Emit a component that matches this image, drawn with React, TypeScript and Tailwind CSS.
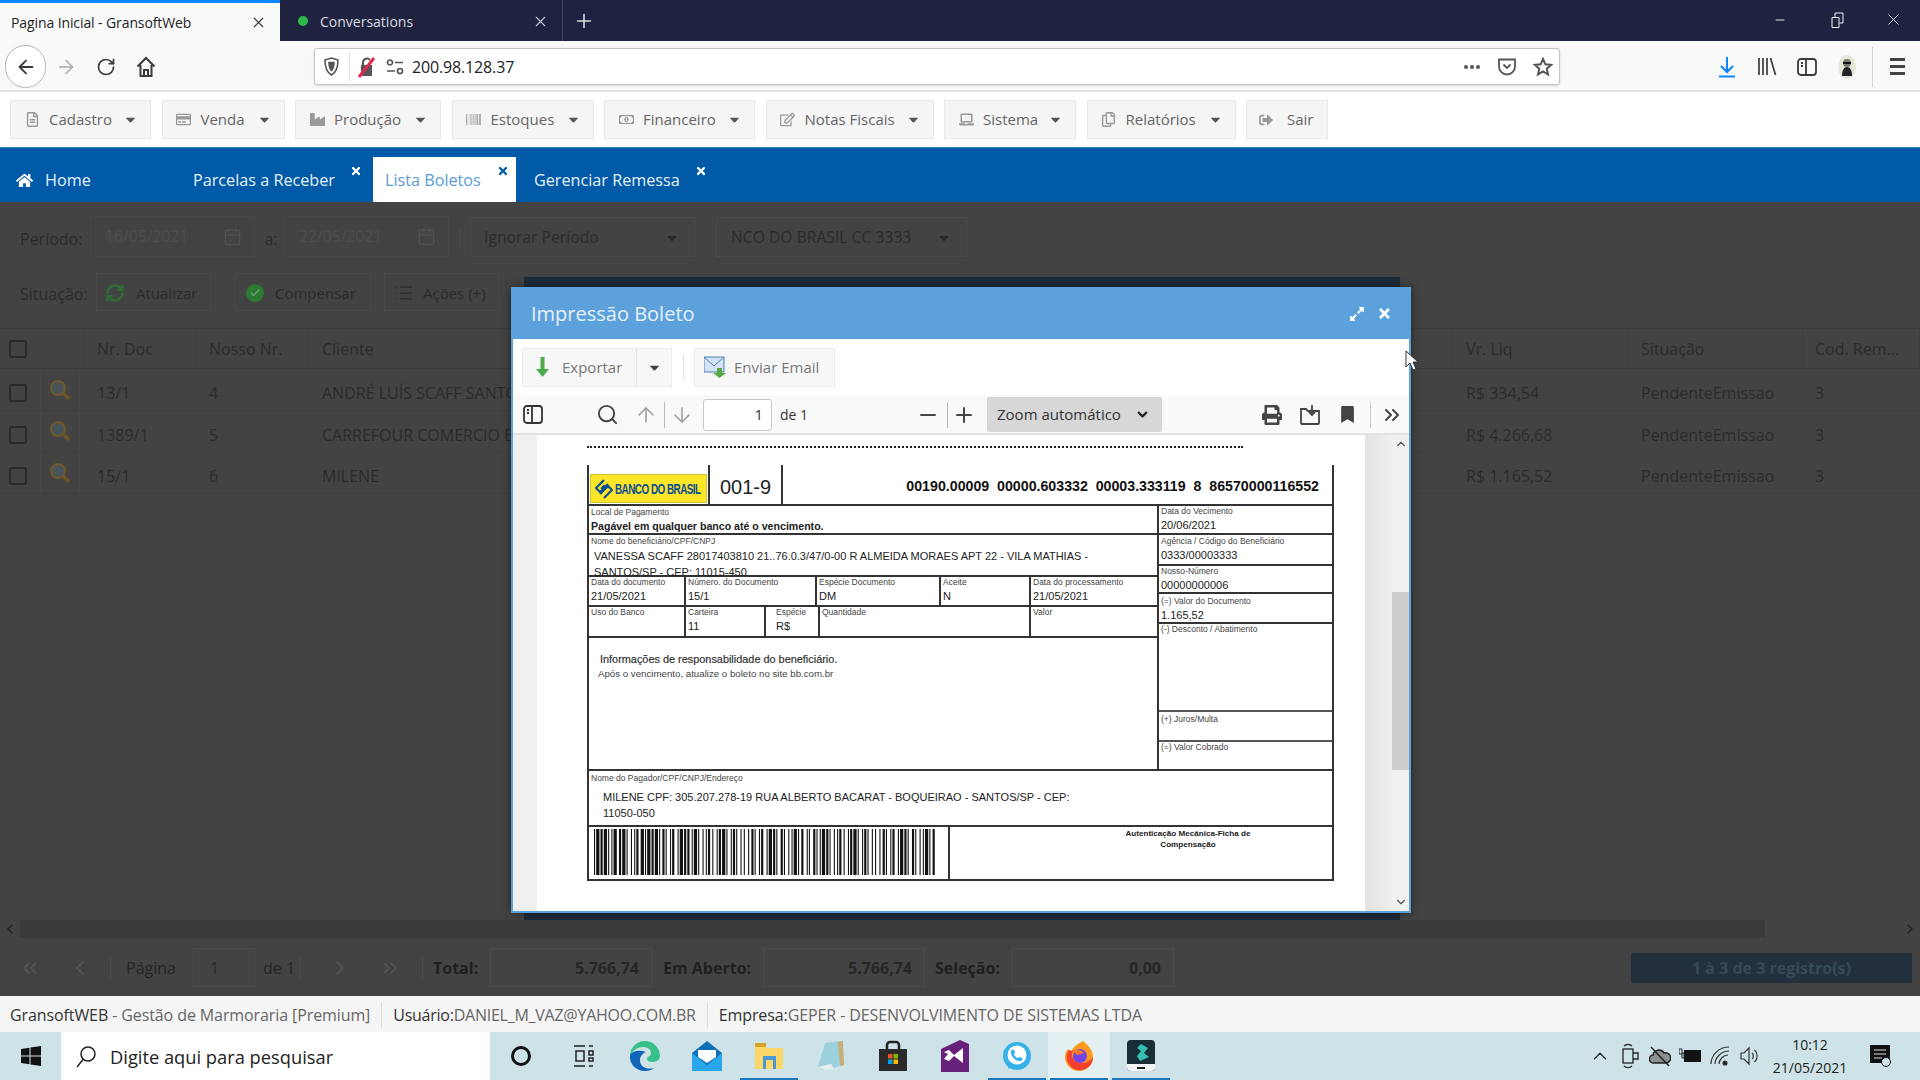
import { ArrowDown, ArrowLeft, ArrowRight, ArrowUp, ChevronLeft, ChevronRight, ChevronsLeft, ChevronsRight, Minus, Plus, RefreshCw, RotateCw, Search, List, Calendar, ChevronDown, ChevronUp, X, Check } from 'lucide-react'
import { FaBarcode, FaBookmark, FaCaretDown, FaExpandAlt, FaHome, FaIndustry, FaLaptop, FaPrint, FaRegCopy, FaRegCreditCard, FaRegEdit, FaRegFileAlt, FaRegMoneyBillAlt, FaSignOutAlt, FaTimes } from 'react-icons/fa'
import type { ReactNode } from 'react'

const menus = [
  { label: 'Cadastro', width: 'w-[141px]', icon: <FaRegFileAlt /> },
  { label: 'Venda', width: 'w-[123px]', icon: <FaRegCreditCard /> },
  { label: 'Produção', width: 'w-[146px]', icon: <FaIndustry /> },
  { label: 'Estoques', width: 'w-[142px]', icon: <FaBarcode /> },
  { label: 'Financeiro', width: 'w-[151px]', icon: <FaRegMoneyBillAlt /> },
  { label: 'Notas Fiscais', width: 'w-[168px]', icon: <FaRegEdit /> },
  { label: 'Sistema', width: 'w-[132px]', icon: <FaLaptop /> },
  { label: 'Relatórios', width: 'w-[149px]', icon: <FaRegCopy /> },
]

const rows = [
  { doc: '13/1', nosso: '4', cliente: 'ANDRÉ LUÍS SCAFF SANTOS', valor: 'R$ 334,54' },
  { doc: '1389/1', nosso: '5', cliente: 'CARREFOUR COMERCIO E INDUSTRIA', valor: 'R$ 4.266,68' },
  { doc: '15/1', nosso: '6', cliente: 'MILENE', valor: 'R$ 1.165,52' },
]

// widths of the barcode bars, alternating black and white
const bars = '113121311211322131131211223111312131122113112311312122113113121122131121311311211312131221131123113121132113121131122311132112113121131211221311213113112113121312211311231131211321131211311223'
  .split('')
  .map(Number)

function Barcode() {
  let x = 0
  const rects = bars.map((w, i) => {
    const rect = i % 2 === 0 ? <rect key={i} x={x} y={0} width={w} height={46} fill="#111" /> : null
    x += w
    return rect
  })
  return (
    <svg width={344} height={46} viewBox={`0 0 ${x} 46`} preserveAspectRatio="none">
      {rects}
    </svg>
  )
}

function Field({ label, value, className, bold }: { label: string; value?: string; className?: string; bold?: boolean }) {
  return (
    <div className={`px-[2px] leading-none ${className ?? ''}`}>
      <div className="text-[8.500px] leading-[11px] text-[#444] whitespace-nowrap">{label}</div>
      {value && <div className={`leading-[16px] text-[#222] whitespace-nowrap ${bold ? 'font-bold text-[10.600px]' : 'text-[11px]'}`}>{value}</div>}
    </div>
  )
}

function TaskSlot({ children, active, open }: { children: ReactNode; active?: boolean; open?: boolean }) {
  return (
    <div className={`relative w-[62px] h-full flex items-center justify-center ${active ? 'bg-[#e4f0f2]' : ''}`}>
      {children}
      {open && <div className="absolute bottom-0 left-[2px] right-[2px] h-[2px] bg-[#1a78bd]" />}
    </div>
  )
}

function BrowserBar() {
  return (
    <>
      <div className="h-[41px] bg-[#20233f] flex text-[14px] shrink-0">
        <div className="w-[280px] bg-[#fafafa] border-t-[3px] border-[#0a84ff] flex items-center pl-[11px] pr-[13px] text-[#222]">
          <span className="tracking-[-0.1px]">Pagina Inicial - GransoftWeb</span>
          <X className="ml-auto w-[17px] h-[17px] text-[#333]" strokeWidth={1.5} />
        </div>
        <div className="w-[283px] border-r border-[#41445f] flex items-center pl-[18px] pr-[13px] text-[#d9dae2] pt-[1px]">
          <span className="w-[10px] h-[10px] rounded-full bg-[#2fb84a]" />
          <span className="ml-[12px]">Conversations</span>
          <X className="ml-auto w-[17px] h-[17px] text-[#c8c9d4]" strokeWidth={1.5} />
        </div>
        <Plus className="ml-[10px] mt-[10px] w-[22px] h-[22px] text-[#d5d6df]" strokeWidth={1.8} />
        <div className="ml-auto flex items-center text-[#f0f0f4] pb-[2px]">
          <Minus className="w-[14px] h-[14px]" strokeWidth={1.6} />
          <svg className="ml-[44px] w-[13px] h-[16px]" viewBox="0 0 13 16" fill="none" stroke="currentColor">
            <path d="M1 5.5h7v10H1zM4 5V1h8v10H8.5" />
          </svg>
          <X className="ml-[40px] mr-[17px] w-[19px] h-[19px]" strokeWidth={1.1} />
        </div>
      </div>
      <div className="h-[51px] bg-[#f9f9fa] border-b-2 border-[#e4e4e4] flex items-center shrink-0 text-[#3b3b3b] pt-[2px]">
        <div className="ml-[5px] w-[41px] h-[43px] rounded-full border border-[#b5b5b5] bg-white flex items-center justify-center">
          <ArrowLeft className="w-[22px] h-[22px]" strokeWidth={2} />
        </div>
        <div className="w-10 flex justify-center text-[#a8a8a8]">
          <ArrowRight className="w-[22px] h-[22px]" strokeWidth={1.6} />
        </div>
        <div className="w-10 flex justify-center">
          <RotateCw className="w-[20px] h-[20px]" strokeWidth={2} />
        </div>
        <div className="w-10 flex justify-center">
          <svg className="w-[20px] h-[22px]" viewBox="0 0 20 22" fill="none" stroke="currentColor" strokeWidth="2">
            <path d="M1.5 10.5 10 2l8.5 8.5M4.5 9v11h11V9M8 20v-6h4v6" />
          </svg>
        </div>
        <div className="ml-[148px] w-[1246px] h-[37px] bg-white border border-[#c4c4c4] rounded-[3px] shadow-sm flex items-center text-[#555]">
          <svg className="ml-[9px] w-[15px] h-[19px]" viewBox="0 0 15 19" fill="none" stroke="currentColor" strokeWidth="1.6">
            <path d="M1 3 7.500 1 14 3c0 7-1 12-6.500 15C2 15 1 10 1 3Z" />
            <path d="M5 5.500h5c0 4-.6 6-2.500 8C5.600 11.500 5 9.500 5 5.500Z" fill="currentColor" />
          </svg>
          <div className="ml-[10px] w-px h-[30px] bg-[#e2e2e2]" />
          <svg className="ml-[8px] w-[18px] h-[22px]" viewBox="0 0 18 22">
            <path d="M3 9h11v11H3z" fill="#555" />
            <path d="M5 9V6a4 4 0 0 1 7-2" fill="none" stroke="#555" strokeWidth="2" />
            <path d="M1 21 16 2" stroke="#e22850" strokeWidth="3" />
          </svg>
          <svg className="ml-[10px] w-[18px] h-[16px]" viewBox="0 0 18 16" fill="none" stroke="#555" strokeWidth="1.7">
            <circle cx="4" cy="3.500" r="2.500" />
            <path d="M9 3.500h8M1 12h8" />
            <circle cx="14" cy="12" r="2.500" />
          </svg>
          <span className="ml-[8px] text-[16px] text-[#222] tracking-[-0.15px]">200.98.128.37</span>
          <div className="ml-auto flex items-center mr-[6px]">
            <div className="flex gap-[2px]">
              <span className="w-[4px] h-[4px] rounded-full bg-[#555]" />
              <span className="w-[4px] h-[4px] rounded-full bg-[#555]" />
              <span className="w-[4px] h-[4px] rounded-full bg-[#555]" />
            </div>
            <svg className="ml-[17px] w-[20px] h-[18px]" viewBox="0 0 20 18" fill="none" stroke="currentColor" strokeWidth="1.800">
              <path d="M2 1.500h16v7a8 8 0 0 1-16 0z" />
              <path d="m6.500 6.500 3.500 3.500 3.500-3.500" />
            </svg>
            <svg className="ml-[16px] w-[20px] h-[20px]" viewBox="0 0 20 20" fill="none" stroke="currentColor" strokeWidth="2">
              <path d="m10 2 2.400 5.300 5.600.6-4.200 3.800 1.200 5.700L10 14.500 5 17.400l1.200-5.700L2 7.900l5.600-.6z" />
            </svg>
          </div>
        </div>
        <div className="ml-[147px] w-10 flex justify-center text-[#0a84ff]">
          <svg className="w-[16px] h-[22px]" viewBox="0 0 16 22" fill="none" stroke="currentColor" strokeWidth="2">
            <path d="M8 1v14M2 10l6 6 6-6" />
            <path d="M0 20.500h16" />
          </svg>
        </div>
        <div className="w-10 flex justify-center">
          <svg className="w-[20px] h-[19px]" viewBox="0 0 20 19" fill="none" stroke="currentColor" strokeWidth="1.700">
            <path d="M2 1v17M6 1v17M10 1v17M13.500 1 18.500 18" />
          </svg>
        </div>
        <div className="w-10 flex justify-center">
          <svg className="w-[20px] h-[18px]" viewBox="0 0 20 18" fill="none" stroke="currentColor" strokeWidth="1.800">
            <rect x="1" y="1" width="18" height="16" rx="3" />
            <path d="M9 1v16M4 5h2M4 8h2" />
          </svg>
        </div>
        <div className="w-10 flex justify-center">
          <svg className="w-[20px] h-[24px]" viewBox="0 0 20 24">
            <ellipse cx="10" cy="12" rx="9" ry="12" fill="#e8e6dc" />
            <circle cx="10" cy="8" r="4" fill="#77776e" />
            <path d="M6 8h8" stroke="#111" strokeWidth="2" />
            <path d="M5 21c0-6 2-9 5-9s5 3 5 9z" fill="#222" />
          </svg>
        </div>
        <div className="ml-[5px] w-px h-[40px] bg-[#d4d4d4]" />
        <div className="ml-[17px] flex flex-col gap-[4px]">
          <span className="w-[15px] h-[3px] bg-[#444]" />
          <span className="w-[15px] h-[3px] bg-[#444]" />
          <span className="w-[15px] h-[3px] bg-[#444]" />
        </div>
      </div>
    </>
  )
}

function AppHeader() {
  return (
    <>
      <div className="h-[55px] bg-white pt-[8px] pl-[10px] flex gap-[10.500px] shrink-0 items-start">
        {menus.map((menu) => (
          <div key={menu.label} className={`${menu.width} h-[39px] bg-[#f5f5f5] border border-[#e9e9e9] flex items-center pl-[12px] pr-[12px] text-[#666] text-[15px]`}>
            <span className="text-[#999] text-[15px] w-[18px] flex justify-center">{menu.icon}</span>
            <span className="ml-[8px]">{menu.label}</span>
            <FaCaretDown className="ml-auto text-[#555] text-[15px]" />
          </div>
        ))}
        <div className="w-[82px] h-[39px] bg-[#f5f5f5] border border-[#e9e9e9] flex items-center pl-[12px] text-[#666] text-[15px]">
          <FaSignOutAlt className="text-[#999] text-[14px]" />
          <span className="ml-[14px]">Sair</span>
        </div>
      </div>
      <div className="h-[55px] bg-[#005aa8] border-t border-[#2c86b4] flex items-end shrink-0 text-[16.200px] text-[#e6f0f8]">
        <div className="h-[45px] flex items-center pl-[16px] w-[193px] pt-[1px]">
          <FaHome className="text-[17px] text-white" />
          <span className="ml-[12px]">Home</span>
        </div>
        <div className="relative h-[45px] flex items-center w-[180px] pt-[1px]">
          Parcelas a Receber
          <FaTimes className="absolute left-[157px] top-[8px] text-[12px] text-white" />
        </div>
        <div className="relative h-[45px] flex items-center bg-white text-[#5d9cd6] w-[143px] pl-[12px] pt-[1px]">
          Lista Boletos
          <FaTimes className="absolute left-[124px] top-[8px] text-[12px] text-[#005aa8]" />
        </div>
        <div className="relative h-[45px] flex items-center pl-[18px] pt-[1px]">
          Gerenciar Remessa
          <FaTimes className="absolute left-[179px] top-[8px] text-[12px] text-white" />
        </div>
      </div>
    </>
  )
}

function DarkPage() {
  return (
    <div className="h-[794px] bg-[#434343] flex flex-col shrink-0 text-[#2b2b2b] text-[16px]">
      <div className="flex-1 min-h-0">
        <div className="h-[41px] mt-[14px] flex items-center text-[15.700px]">
          <span className="ml-[20px] w-[70px] pt-[5px] text-[16px]">Período:</span>
          <div className="w-[165px] h-[41px] border border-[#474747] flex items-center pl-[14px] pr-[12px] text-[#4f4f4f]">
            16/05/2021
            <Calendar className="ml-auto w-[19px] h-[19px] text-[#525252]" strokeWidth={1.500} />
          </div>
          <span className="ml-[3px] w-[26px] text-center pt-[5px] text-[16px]">a:</span>
          <div className="w-[165px] h-[41px] border border-[#474747] flex items-center pl-[14px] pr-[12px] text-[#4f4f4f]">
            22/05/2021
            <Calendar className="ml-auto w-[19px] h-[19px] text-[#525252]" strokeWidth={1.500} />
          </div>
          <div className="ml-[10px] w-px h-[20px] bg-[#4c4c4c]" />
          <div className="ml-[10px] w-[225px] h-[40px] border border-[#4a4a4a] flex items-center pl-[13px] pr-[14px] pt-[2px]">
            Ignorar Período
            <FaCaretDown className="ml-auto text-[16px]" />
          </div>
          <div className="ml-[21px] w-[251px] h-[40px] border border-[#4a4a4a] flex items-center pl-[14px] pr-[14px] pt-[2px]">
            NCO DO BRASIL CC 3333
            <FaCaretDown className="ml-auto text-[16px]" />
          </div>
        </div>
        <div className="h-[38px] mt-[16px] flex items-center text-[15px]">
          <span className="ml-[20px] w-[76px] pt-[4px] text-[16px]">Situação:</span>
          <div className="w-[116px] h-[38px] border border-[#494949] flex items-center pl-[8px] pt-[2px]">
            <RefreshCw className="w-[20px] h-[20px] text-[#2f6b33]" strokeWidth={3} />
            <span className="ml-[11px]">Atualizar</span>
          </div>
          <div className="ml-[23px] w-[137px] h-[38px] border border-[#494949] flex items-center pl-[10px] pt-[2px]">
            <span className="w-[18px] h-[18px] rounded-full bg-[#2c7a32] flex items-center justify-center">
              <Check className="w-[12px] h-[12px] text-[#6c9a6c]" strokeWidth={3} />
            </span>
            <span className="ml-[11px]">Compensar</span>
          </div>
          <div className="ml-[12px] w-[116px] h-[38px] border border-[#494949] flex items-center pl-[9px] pt-[2px]">
            <List className="w-[20px] h-[20px]" strokeWidth={1.500} />
            <span className="ml-[9px]">Ações (+)</span>
          </div>
        </div>
        <div className="mt-[17px] h-[41px] flex items-center border-y border-[#3d3d3d]">
          <div className="w-[83px] pl-[9px]">
            <span className="block w-[18px] h-[18px] border-2 border-[#2b2b2b] rounded-[3px]" />
          </div>
          <div className="w-[112px] h-full border-l border-[#3d3d3d] pl-[13px] flex items-center">Nr. Doc</div>
          <div className="w-[113px] h-full border-l border-[#3d3d3d] pl-[13px] flex items-center">Nosso Nr.</div>
          <div className="flex-1 h-full border-l border-[#3d3d3d] pl-[13px] flex items-center">Cliente</div>
          <div className="w-[176px] h-full border-l border-[#3d3d3d] pl-[13px] flex items-center">Vr. Liq</div>
          <div className="w-[174px] h-full border-l border-[#3d3d3d] pl-[12px] flex items-center">Situação</div>
          <div className="w-[118px] h-full border-x border-[#3d3d3d] pl-[12px] flex items-center whitespace-nowrap">Cod. Rem...</div>
        </div>
        {rows.map((row) => (
          <div key={row.doc} className="h-[41.500px] flex items-center border-b border-[#3f3f3f] pt-[8px]">
            <div className="w-[40px] pl-[9px]">
              <span className="block w-[18px] h-[18px] border-2 border-[#2b2b2b] rounded-[3px]" />
            </div>
            <div className="w-[40px] -mt-[8px] self-stretch border-x border-[#474747] flex items-center justify-center">
              <svg className="w-[22px] h-[22px] mt-[1px]" viewBox="0 0 22 22" fill="none">
                <circle cx="9" cy="9" r="7" fill="#4a5458" stroke="#6e5a28" strokeWidth="2" />
                <path d="m14 14 6 6" stroke="#6e5424" strokeWidth="3.500" />
              </svg>
            </div>
            <div className="w-[3px]" />
            <div className="w-[112px] pl-[14px]">{row.doc}</div>
            <div className="w-[113px] pl-[14px]">{row.nosso}</div>
            <div className="flex-1 pl-[14px] whitespace-nowrap">{row.cliente}</div>
            <div className="w-[176px] pl-[14px]">{row.valor}</div>
            <div className="w-[174px] pl-[13px]">PendenteEmissao</div>
            <div className="w-[118px] pl-[13px]">3</div>
          </div>
        ))}
      </div>
      <div className="h-[18px] flex items-center bg-[#434343]">
        <ChevronLeft className="w-[20px] h-[16px] text-[#222]" />
        <div className="w-[1745px] h-full bg-[#3a3a3a]" />
        <ChevronRight className="ml-auto w-[20px] h-[16px] text-[#222]" />
      </div>
      <div className="h-[58px] flex items-center text-[#2b2b2b] pt-[1px]">
        <ChevronsLeft className="ml-[18px] w-[24px] h-[24px] text-[#565656]" strokeWidth={1.500} />
        <ChevronLeft className="ml-[26px] w-[24px] h-[24px] text-[#565656]" strokeWidth={1.500} />
        <div className="ml-[18px] w-px h-[22px] bg-[#4c4c4c]" />
        <span className="ml-[15px] w-[67px] text-[#252525]">Página</span>
        <div className="w-[62px] h-[39px] border border-[#4a4a4a] flex items-center pl-[16px]">1</div>
        <span className="ml-[8px] w-[36px] text-[#252525]">de 1</span>
        <div className="w-px h-[22px] bg-[#4c4c4c]" />
        <ChevronRight className="ml-[28px] w-[24px] h-[24px] text-[#565656]" strokeWidth={1.500} />
        <ChevronsRight className="ml-[26px] w-[24px] h-[24px] text-[#565656]" strokeWidth={1.500} />
        <div className="ml-[20px] w-px h-[22px] bg-[#4c4c4c]" />
        <span className="ml-[10px] w-[57px] font-bold text-[#1f1f1f]">Total:</span>
        <div className="w-[162px] h-[39px] border border-[#4a4a4a] flex items-center justify-end pr-[12px] font-bold text-[#262626]">5.766,74</div>
        <span className="ml-[11px] w-[100px] font-bold text-[#1f1f1f] whitespace-nowrap">Em Aberto:</span>
        <div className="w-[162px] h-[39px] border border-[#4a4a4a] flex items-center justify-end pr-[12px] font-bold text-[#262626]">5.766,74</div>
        <span className="ml-[10px] w-[77px] font-bold text-[#1f1f1f]">Seleção:</span>
        <div className="w-[162px] h-[39px] border border-[#4a4a4a] flex items-center justify-end pr-[12px] font-bold text-[#262626]">0,00</div>
        <div className="ml-auto mr-[8px] w-[281px] h-[30px] bg-[#22313d] flex items-center justify-center font-bold text-[#37495a]">1 à 3 de 3 registro(s)</div>
      </div>
    </div>
  )
}

function Boleto() {
  return (
    <div className="w-[747px] ml-[50px] font-['Liberation_Sans',sans-serif] text-[#222]">
      <div className="h-[41px] flex items-end border-b-2 border-[#333]">
        <div className="w-[121px] h-full border-l-2 border-[#333] pl-[1px] flex items-end pb-[1px]">
          <div className="w-[117px] h-[29px] bg-[#fde528] border border-[#c9c23c] flex items-center pl-[4px] text-[#0b4f94]">
            <svg className="w-[18px] h-[20px] shrink-0" viewBox="0 0 18 20" fill="none" stroke="#0b4f94" strokeWidth="2.200">
              <path d="M9 1 1 9l4 4 8-8M9 19l8-8-4-4-8 8M9 7l-2 2 2 2 2-2z" />
            </svg>
            <span className="ml-[2px] text-[15px] font-bold leading-none whitespace-nowrap tracking-[-0.8px] origin-left scale-x-[0.66]">BANCO DO BRASIL</span>
          </div>
        </div>
        <div className="w-[73px] h-full border-l-2 border-[#333] flex items-center justify-center text-[20px] pt-[4px]">001-9</div>
        <div className="flex-1 h-full border-l-2 border-[#333] border-r-2 flex items-center justify-end pr-[13px] pt-[4px] text-[14.200px] font-bold whitespace-pre text-[#111]">
          00190.00009  00000.603332  00003.333119  8  86570000116552
        </div>
      </div>
      <div className="flex h-[265px] border-x-2 border-b-2 border-[#333]">
        <div className="w-[568px] shrink-0">
          <Field label="Local de Pagamento" value="Pagável em qualquer banco até o vencimento." className="h-[29px] border-b-2 border-[#333] pt-[1px]" bold />
          <div className="h-[42px] border-b-2 border-[#333] pt-[1px] px-[2px]">
            <div className="text-[8.500px] leading-[11px] text-[#444]">Nome do beneficiário/CPF/CNPJ</div>
            <div className="pl-[3px] mt-[1px] text-[11px] leading-[16px] whitespace-nowrap">
              VANESSA SCAFF 28017403810 21..76.0.3/47/0-00 R ALMEIDA MORAES APT 22 - VILA MATHIAS -<br />SANTOS/SP - CEP: 11015-450
            </div>
          </div>
          <div className="h-[30px] border-b-2 border-[#333] flex">
            <Field label="Data do documento" value="21/05/2021" className="w-[97px] border-r-2 border-[#333]" />
            <Field label="Número. do Documento" value="15/1" className="w-[131px] border-r-2 border-[#333]" />
            <Field label="Espécie Documento" value="DM" className="w-[124px] border-r-2 border-[#333]" />
            <Field label="Aceite" value="N" className="w-[90px] border-r-2 border-[#333]" />
            <Field label="Data do processamento" value="21/05/2021" className="flex-1" />
          </div>
          <div className="h-[31px] border-b-2 border-[#333] flex">
            <Field label="Uso do Banco" className="w-[97px] border-r-2 border-[#333]" />
            <Field label="Carteira" value="11" className="w-[80px] border-r-2 border-[#333]" />
            <Field label="Espécie" value="R$" className="w-[54px] border-r-2 border-[#333] pl-[10px]" />
            <Field label="Quantidade" className="w-[211px] border-r-2 border-[#333]" />
            <Field label="Valor" className="flex-1" />
          </div>
          <div className="pl-[9px] pt-[13px]">
            <div className="pl-[2px] text-[10.900px] leading-[16px] text-[#333] [-webkit-text-stroke:0.2px_#333]">Informações de responsabilidade do beneficiário.</div>
            <div className="text-[9.700px] leading-[14px] text-[#444]">Após o vencimento, atualize o boleto no site bb.com.br</div>
          </div>
        </div>
        <div className="flex-1 border-l-2 border-[#333]">
          <Field label="Data do Vecimento" value="20/06/2021" className="h-[29px] border-b-2 border-[#333]" />
          <Field label="Agência / Código do Beneficiário" value="0333/00003333" className="h-[31px] border-b-2 border-[#333] pt-[1px]" />
          <Field label="Nosso-Número" value="00000000006" className="h-[28px] border-b-2 border-[#333]" />
          <Field label="(=) Valor do Documento" value="1.165,52" className="h-[30px] border-b-2 border-[#333] pt-[2px]" />
          <Field label="(-) Desconto / Abatimento" className="h-[88px] border-b-2 border-[#555]" />
          <Field label="(+) Juros/Multa" className="h-[30px] border-b-2 border-[#555] pt-[2px]" />
          <Field label="(=) Valor Cobrado" />
        </div>
      </div>
      <div className="h-[56px] border-x-2 border-b-2 border-[#333] pt-[2px] px-[2px]">
        <div className="text-[8.500px] leading-[11px] text-[#444]">Nome do Pagador/CPF/CNPJ/Endereço</div>
        <div className="pl-[12px] mt-[5px] text-[11px] leading-[16px] text-[#222]">
          MILENE CPF: 305.207.278-19 RUA ALBERTO BACARAT - BOQUEIRAO - SANTOS/SP - CEP:<br />11050-050
        </div>
      </div>
      <div className="h-[54px] border-x-2 border-b-2 border-[#333] flex">
        <div className="w-[361px] border-r-2 border-[#333] pl-[5px] pt-[2px]">
          <Barcode />
        </div>
        <div className="flex-1 pt-[1px] pl-[106px] pr-[12px] text-center text-[8.100px] leading-[11px] font-bold text-[#222] whitespace-nowrap">
          Autenticação Mecânica-Ficha de<br />Compensação
        </div>
      </div>
    </div>
  )
}

function Modal() {
  return (
    <>
      <div className="absolute left-[524px] top-[277px] w-[876px] h-[643px] bg-[#1c2b38]" />
      <div className="absolute left-[511px] top-[287px] w-[900px] h-[626px] border-2 border-t-0 border-[#5ca1dc] bg-white flex flex-col shadow-[0_0_8px_rgba(0,0,0,0.5)]">
        <div className="-mx-[2px] h-[52px] bg-[#5ca1dc] flex items-center pl-[20px] text-[20px] text-[#e6f1fa] shrink-0 pt-[1px]">
          Impressão Boleto
          <FaExpandAlt className="ml-auto text-[16px] text-white" />
          <FaTimes className="ml-[12px] mr-[19px] text-[15px] text-white" />
        </div>
        <div className="h-[56px] flex items-center pl-[9px] shrink-0 text-[15px] text-[#777]">
          <div className="w-[150px] h-[39px] bg-[#f7f7f7] border border-[#ececec] flex items-center">
            <svg className="ml-[13px] w-[13px] h-[20px]" viewBox="0 0 13 20">
              <path d="M4.500 0h4v12H13l-6.500 8L0 12h4.500z" fill="#4caa4a" />
            </svg>
            <span className="ml-[13px]">Exportar</span>
            <div className="ml-auto w-[35px] h-full border-l border-[#e4e4e4] flex items-center justify-center">
              <FaCaretDown className="text-[#444] text-[15px]" />
            </div>
          </div>
          <div className="ml-[11px] w-px h-[26px] bg-[#e2e2e2]" />
          <div className="ml-[10px] w-[141px] h-[39px] bg-[#f7f7f7] border border-[#ececec] flex items-center pl-[9px]">
            <svg className="w-[22px] h-[22px]" viewBox="0 0 22 22">
              <rect x="0" y="1" width="20" height="15" fill="#d3e3f5" stroke="#4f7fb8" />
              <path d="m0 1 10 9 10-9" fill="none" stroke="#4f7fb8" />
              <path d="M9 17h4v-5h5v5h4l-6.500 5z" fill="#57a944" />
            </svg>
            <span className="ml-[8px]">Enviar Email</span>
          </div>
        </div>
        <div className="h-[40px] bg-[#f9f9fa] border-b-2 border-[#e2e2e2] flex items-center shrink-0 text-[#444] text-[14px] pt-[1px]">
          <svg className="ml-[10px] w-[20px] h-[19px]" viewBox="0 0 20 19" fill="none" stroke="#333" strokeWidth="1.800">
            <rect x="1" y="1" width="18" height="17" rx="3" />
            <path d="M9 1v17M4 5h2M4 8h2" />
          </svg>
          <Search className="ml-[53px] w-[23px] h-[23px]" strokeWidth={2} />
          <ArrowUp className="ml-[15px] w-[24px] h-[24px] text-[#9a9a9a]" strokeWidth={1.500} />
          <div className="ml-[6px] w-px h-[26px] bg-[#bbb]" />
          <ArrowDown className="ml-[5px] w-[24px] h-[24px] text-[#9a9a9a]" strokeWidth={1.500} />
          <div className="ml-[9px] w-[69px] h-[32px] bg-white border border-[#c8c8c8] rounded-[3px] flex items-center justify-end pr-[8px] text-[15px] text-[#333]">1</div>
          <span className="ml-[8px] w-[29px] whitespace-nowrap text-[#333]">de 1</span>
          <Minus className="ml-[107px] w-[24px] h-[24px]" strokeWidth={2} />
          <div className="ml-[7px] w-px h-[26px] bg-[#bbb]" />
          <Plus className="ml-[4px] w-[24px] h-[24px]" strokeWidth={2} />
          <div className="ml-[11px] w-[175px] h-[35px] bg-[#d7d7d7] rounded-[2px] flex items-center pl-[10px] pr-[12px] text-[15px] text-[#333]">
            Zoom automático
            <ChevronDown className="ml-auto w-[15px] h-[15px] text-[#222]" strokeWidth={3.500} />
          </div>
          <FaPrint className="ml-[100px] text-[20px]" />
          <svg className="ml-[18px] w-[20px] h-[21px]" viewBox="0 0 20 21" fill="none" stroke="#444" strokeWidth="1.800">
            <path d="M1 5h5l2 2h11v12a1 1 0 0 1-1 1H2a1 1 0 0 1-1-1z" />
            <path d="M12 1v10M9 8l3 3 3-3" />
          </svg>
          <FaBookmark className="ml-[19px] text-[17px]" />
          <div className="ml-[14px] w-px h-[26px] bg-[#ccc]" />
          <ChevronsRight className="ml-[9px] w-[24px] h-[24px]" strokeWidth={2} />
        </div>
        <div className="flex-1 min-h-0 flex bg-[#f0f0f0]">
          <div className="w-[24px]" />
          <div className="w-[828px] h-full bg-white overflow-hidden">
            <div className="mt-[11px] mb-[17px] ml-[50px] w-[656px] h-[2px] border-t-2 border-dotted border-[#222]" />
            <Boleto />
          </div>
          <div className="w-[27px] bg-gradient-to-r from-[#e3e3e3] to-[#efefef]" />
          <div className="w-[17px] flex flex-col items-center bg-[#f0f0f0]">
            <ChevronUp className="mt-[2px] w-[14px] h-[14px] text-[#555]" strokeWidth={2} />
            <div className="mt-[141px] w-full h-[178px] bg-[#cdcdcd]" />
            <ChevronDown className="mt-auto mb-[2px] w-[14px] h-[14px] text-[#555]" strokeWidth={2} />
          </div>
        </div>
      </div>
      <svg className="absolute left-[1405px] top-[350px] w-[14px] h-[21px]" viewBox="0 0 14 21">
        <path d="M1 1v16l4-4 3 7 3-1-3-7h5z" fill="#fff" stroke="#333" />
      </svg>
    </>
  )
}

function Taskbar() {
  return (
    <div className="h-[48px] bg-[#cde3e8] flex items-stretch shrink-0 text-[#222]">
      <div className="w-[61px] flex items-center justify-center">
        <svg className="w-[20px] h-[20px]" viewBox="0 0 20 20" fill="#111">
          <path d="M0 3 8.500 1.700V9.500H0zM9.500 1.600 20 0v9.500H9.500zM0 10.500h8.500v7.800L0 17zM9.500 10.500H20V20L9.500 18.400z" />
        </svg>
      </div>
      <div className="w-[429px] bg-white flex items-center pl-[14px] text-[18.300px] pt-[1px]">
        <svg className="w-[22px] h-[24px]" viewBox="0 0 22 24" fill="none" stroke="#222" strokeWidth="1.500">
          <circle cx="13" cy="9" r="7" />
          <path d="M8 14.500 2 22" />
        </svg>
        <span className="ml-[13px]">Digite aqui para pesquisar</span>
      </div>
      <TaskSlot>
        <span className="w-[20px] h-[20px] rounded-full border-[3px] border-[#111]" />
      </TaskSlot>
      <TaskSlot>
        <svg className="w-[22px] h-[22px]" viewBox="0 0 22 22" fill="none" stroke="#222" strokeWidth="1.500">
          <path d="M2 1h11M2 21h11M4 6h8v10H4zM17 1h4M17 21h4M17 6h4v4h-4zM17 13h4v3h-4z" />
        </svg>
      </TaskSlot>
      <TaskSlot>
        <svg className="w-[32px] h-[32px]" viewBox="0 0 32 32">
          <path d="M16 1a15 15 0 0 1 15 15c0 4-4 6-8 6-3 0-5-1-5-3 0-3 4-2 4-6 0-4-4-6-8-6-5 0-10 3-13 8A15 15 0 0 1 16 1z" fill="#37c08a" />
          <path d="M1 15c-1 9 6 16 15 16 4 0 7-1 9-3-7 2-14-1-14-8 0-4 3-7 6-8-7-3-15 0-16 3z" fill="#0f66b8" />
        </svg>
      </TaskSlot>
      <TaskSlot>
        <svg className="w-[30px] h-[30px]" viewBox="0 0 30 30">
          <path d="M15 0 30 12v18H0V12z" fill="#0d6fb8" />
          <path d="M6 9h18v7l-9 6-9-6z" fill="#fff" />
          <path d="M0 12 15 24 30 12v18H0z" fill="#28a8ea" />
        </svg>
      </TaskSlot>
      <TaskSlot open>
        <svg className="w-[30px] h-[28px]" viewBox="0 0 30 28">
          <path d="M1 3h10l2 3h16v21H1z" fill="#fbd669" />
          <path d="M1 1h11v4H1z" fill="#d9a32b" />
          <path d="M9 14h13v13h-3v-9h-7v9H9z" fill="#4a97d4" />
        </svg>
      </TaskSlot>
      <TaskSlot>
        <svg className="w-[28px] h-[30px]" viewBox="0 0 28 30">
          <path d="M8 2 25 0l2 24-20 5L1 26z" fill="#9cd0dc" />
          <path d="m21 1 5-1 1 24-4 1z" fill="#c9ae7a" />
          <path d="m1 26 13-3 3 5-9 1z" fill="#e7eef0" />
        </svg>
      </TaskSlot>
      <TaskSlot>
        <svg className="w-[30px] h-[32px]" viewBox="0 0 30 32">
          <path d="M9 9V5a3 3 0 0 1 3-3h6a3 3 0 0 1 3 3v4" fill="none" stroke="#222" strokeWidth="2.500" />
          <path d="M1 9h28v22H1z" fill="#2a2a2a" />
          <rect x="10" y="14" width="4.500" height="4.500" fill="#f25022" />
          <rect x="15.500" y="14" width="4.500" height="4.500" fill="#7fba00" />
          <rect x="10" y="19.500" width="4.500" height="4.500" fill="#00a4ef" />
          <rect x="15.500" y="19.500" width="4.500" height="4.500" fill="#ffb900" />
        </svg>
      </TaskSlot>
      <TaskSlot>
        <svg className="w-[28px] h-[32px]" viewBox="0 0 28 32">
          <path d="M19 0 28 4v28H0V9z" fill="#68217a" />
          <path d="M3 12 8 10l5 5 9-7v15l-9-7-5 5-5-2 4-5z" fill="#fff" />
        </svg>
      </TaskSlot>
      <TaskSlot open>
        <svg className="w-[30px] h-[30px]" viewBox="0 0 30 30">
          <circle cx="15" cy="15" r="14" fill="#36b1ea" />
          <circle cx="15" cy="14" r="9.500" fill="#fff" />
          <path d="M9 10c1-2 3-2 3.500 0l.5 2-1 1c.5 2 2 3.500 4 4l1-1 2 .5c2 .5 2 2.500 0 3.500-5 1-11-5-10-10z" fill="#36b1ea" />
          <path d="m7 22-1 6 6-3z" fill="#36b1ea" />
        </svg>
      </TaskSlot>
      <TaskSlot active open>
        <svg className="w-[30px] h-[32px]" viewBox="0 0 30 32">
          <path d="M19 1c5 4 10 9 10 16a14 14 0 1 1-28 0c0-3 1-6 3-8l3 3c2-5 6-8 12-11z" fill="#ff9a1f" />
          <path d="M5 10a13 13 0 0 0 13 20c6-1 11-6 11-13-3 6-13 8-18 4-3-3-4-7-2-10z" fill="#f2402f" />
          <circle cx="16" cy="16" r="7" fill="#7542e5" />
          <path d="M9 11c4-2 9-1 11 2l-7 2z" fill="#ff7a1f" />
        </svg>
      </TaskSlot>
      <TaskSlot open>
        <svg className="w-[28px] h-[32px]" viewBox="0 0 28 32">
          <rect x="0" y="0" width="28" height="31" rx="4" fill="#192d36" />
          <path d="M0 24h28v3a4 4 0 0 1-4 4H4a4 4 0 0 1-4-4z" fill="#f2f4f4" />
          <path d="M14 4 21 8 17 13 22 17 13 21 10 16 14 11 10 8z" fill="#35bfb0" />
          <path d="M10 27h8v2h-8z" fill="#222" />
        </svg>
      </TaskSlot>
      <div className="ml-auto flex items-center">
        <div className="w-[30px] flex justify-center">
          <ChevronUp className="w-[22px] h-[22px] text-[#222]" strokeWidth={1.300} />
        </div>
        <div className="w-[30px] flex justify-center">
          <svg className="w-[18px] h-[26px]" viewBox="0 0 18 26" fill="none" stroke="#222" strokeWidth="1.300">
            <rect x="2" y="6" width="10" height="14" />
            <path d="M12 10h5v6h-5M3 3a6 6 0 0 1 8 0M3 23a6 6 0 0 0 8 0" />
          </svg>
        </div>
        <div className="w-[30px] flex justify-center">
          <svg className="w-[22px] h-[22px]" viewBox="0 0 22 22" fill="#8a8f8f" stroke="#222" strokeWidth="1.500">
            <path d="M5 18a4 4 0 0 1-1-8 6 6 0 0 1 11-2 5 5 0 0 1 3 10z" />
            <path d="m2 2 18 19" fill="none" />
          </svg>
        </div>
        <div className="w-[30px] flex justify-center">
          <svg className="w-[22px] h-[16px]" viewBox="0 0 22 16">
            <rect x="5" y="2" width="17" height="12" fill="#111" />
            <path d="M0 1h3v5H0zM3 5h2v5H3z" fill="none" stroke="#222" />
          </svg>
        </div>
        <div className="w-[30px] flex justify-center">
          <svg className="w-[20px] h-[20px]" viewBox="0 0 20 20" fill="none" stroke="#333" strokeWidth="1.200">
            <path d="M1 18C1 9 9 1 19 1M5 18c0-6 6-13 14-13M9 18c0-4 4-9 9-9" />
            <circle cx="15" cy="17" r="2" fill="#222" />
          </svg>
        </div>
        <div className="w-[30px] flex justify-center">
          <svg className="w-[20px] h-[20px]" viewBox="0 0 20 20" fill="none" stroke="#333" strokeWidth="1.200">
            <path d="M1 7h3l5-5v16l-5-5H1zM12 7a4 4 0 0 1 0 6M14.500 4a8 8 0 0 1 0 12" />
          </svg>
        </div>
        <div className="ml-[3px] w-[84px] text-center text-[14px] leading-[23px] text-[#222]">
          10:12<br />21/05/2021
        </div>
        <div className="w-[58px] flex justify-center">
          <svg className="w-[22px] h-[22px]" viewBox="0 0 22 22">
            <path d="M0 0h20v18H0z" fill="#111" />
            <path d="M4 5h12M4 9h12M4 13h8" stroke="#ddd" strokeWidth="1.200" />
            <circle cx="16" cy="17" r="4.500" fill="#cde3e8" stroke="#111" />
          </svg>
        </div>
        <div className="w-[10px]" />
      </div>
    </div>
  )
}

export default function App() {
  return (
    <div className="relative w-[1920px] h-[1080px] overflow-hidden flex flex-col font-['Open_Sans',sans-serif]">
      <BrowserBar />
      <AppHeader />
      <DarkPage />
      <div className="h-[36px] bg-[#f5f5f5] flex items-center pl-[10px] pt-[1px] text-[16px] text-[#666] shrink-0 tracking-[-0.1px]">
        <span><span className="text-[#333]">GransoftWEB</span> - Gestão de Marmoraria [Premium]</span>
        <div className="mx-[11px] w-px h-[26px] bg-[#ddd]" />
        <span className="tracking-[-0.25px]"><span className="text-[#333]">Usuário:</span>DANIEL_M_VAZ@YAHOO.COM.BR</span>
        <div className="mx-[11px] w-px h-[26px] bg-[#ddd]" />
        <span className="tracking-[-0.1px]"><span className="text-[#333]">Empresa:</span>GEPER - DESENVOLVIMENTO DE SISTEMAS LTDA</span>
      </div>
      <Taskbar />
      <Modal />
    </div>
  )
}
